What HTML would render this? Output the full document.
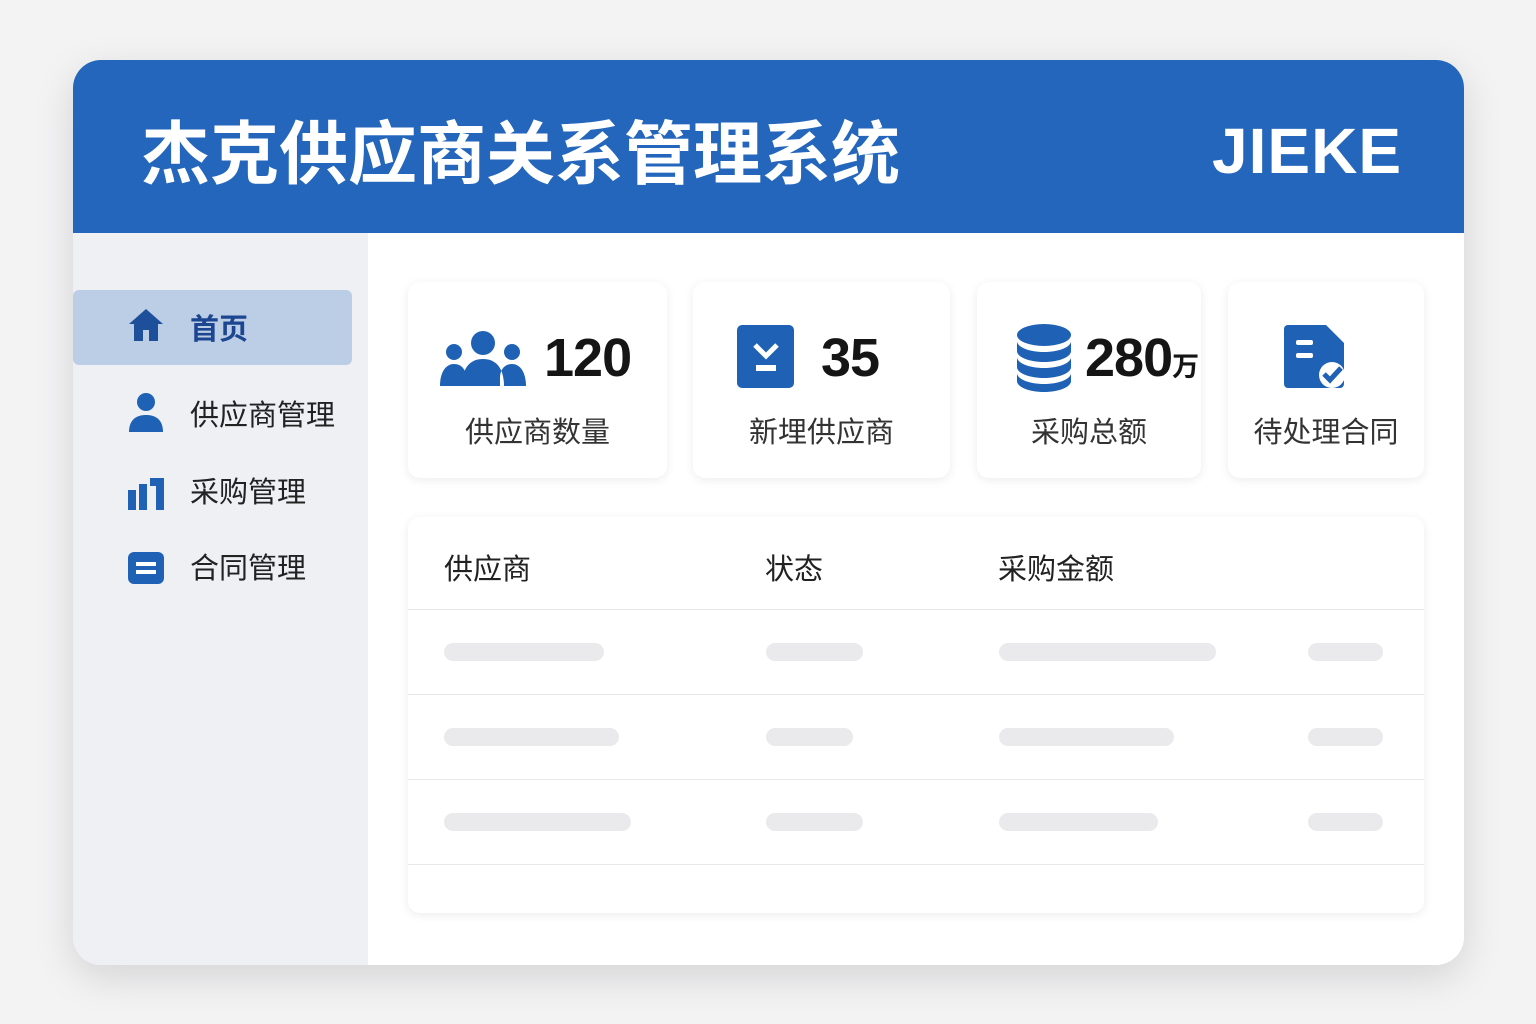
<!DOCTYPE html>
<html><head><meta charset="utf-8"><style>
*{margin:0;padding:0;box-sizing:border-box}
body{width:1536px;height:1024px;background:#f3f3f4;font-family:"Liberation Sans","Noto Sans CJK SC",sans-serif;position:relative;overflow:hidden}
.app{position:absolute;left:73px;top:60px;width:1391px;height:905px;border-radius:28px;background:#fff;overflow:hidden;box-shadow:0 12px 40px rgba(0,0,0,.13)}
.hdr{position:absolute;left:0;top:0;width:100%;height:173px;background:#2366bb}
.title{position:absolute;left:68px;top:46px;color:#fff;font-size:69px;font-weight:bold;letter-spacing:0;font-family:"Noto Sans CJK SC",sans-serif;line-height:84px}
.logo{position:absolute;right:62px;top:54px;color:#fff;font-size:64px;font-weight:bold;line-height:74px;letter-spacing:1px}
.side{position:absolute;left:0;top:173px;width:295px;height:732px;background:#eef0f4}
.act{position:absolute;left:0;top:57px;width:279px;height:75px;background:#bccde6;border-radius:6px}
.nav{position:absolute;left:117px;font-size:29px;color:#222;font-family:"Noto Sans CJK SC",sans-serif;line-height:40px;white-space:nowrap}
.ic{position:absolute;left:54px}
.card{position:absolute;top:222px;height:196px;background:#fff;border-radius:12px;box-shadow:0 2px 10px rgba(0,0,0,.08)}
.num{position:absolute;font-size:54px;font-weight:bold;color:#151515;line-height:60px;white-space:nowrap;letter-spacing:-1px}
.lbl{position:absolute;top:128px;width:100%;text-align:center;font-size:29px;color:#333;font-family:"Noto Sans CJK SC",sans-serif;line-height:40px}
.tbl{position:absolute;left:335px;top:457px;width:1016px;height:396px;background:#fff;border-radius:12px;box-shadow:0 2px 10px rgba(0,0,0,.08)}
.th{position:absolute;top:30px;font-size:29px;color:#222;font-family:"Noto Sans CJK SC",sans-serif;line-height:40px}
.ln{position:absolute;left:0;width:100%;height:1px;background:#e8e8ea}
.b{position:absolute;height:18px;border-radius:9px;background:#eaeaec}
</style></head><body>
<div class="app">
<div class="hdr"><div class="title">杰克供应商关系管理系统</div><div class="logo">JIEKE</div></div>
<div class="side">
<div class="act"></div>
<svg class="ic" style="top:73px" width="38" height="38" viewBox="0 0 38 38"><path d="M19 3L2 18h5v17h9V24h6v11h9V18h5z" fill="#1d4f9a"/></svg>
<div class="nav" style="top:74px;color:#1d4690;font-weight:bold">首页</div>
<svg class="ic" style="top:158px" width="38" height="42" viewBox="0 0 38 42"><circle cx="19" cy="11" r="9" fill="#1f62b5"/><path d="M2 41c0-12 7-17 17-17s17 5 17 17z" fill="#1f62b5"/></svg>
<div class="nav" style="top:160px">供应商管理</div>
<svg class="ic" style="top:243px" width="38" height="34" viewBox="0 0 38 34"><path d="M1 14h8v20H1zM12 8h8v26h-8zM23 2h14v32h-8V10h-6z" fill="#1f62b5"/></svg>
<div class="nav" style="top:237px">采购管理</div>
<svg class="ic" style="top:318px" width="38" height="34" viewBox="0 0 38 34"><rect x="1" y="1" width="36" height="32" rx="6" fill="#1f62b5"/><rect x="9" y="11" width="20" height="4" fill="#fff"/><rect x="9" y="19" width="20" height="4" fill="#fff"/></svg>
<div class="nav" style="top:313px">合同管理</div>
</div>
<div class="card" style="left:335px;width:259px">
<svg style="position:absolute;left:32px;top:48px" width="86" height="58" viewBox="0 0 86 58"><circle cx="43" cy="13" r="12" fill="#1f62b5"/><circle cx="14" cy="22" r="8" fill="#1f62b5"/><circle cx="72" cy="22" r="8" fill="#1f62b5"/><path d="M0 56c0-14 6-22 14-22s12 6 12 14v8zM86 56c0-14-6-22-14-22s-12 6-12 14v8zM22 56c0-18 8-27 21-27s21 9 21 27z" fill="#1f62b5"/></svg>
<div class="num" style="left:136px;top:46px">120</div><div class="lbl">供应商数量</div></div>
<div class="card" style="left:620px;width:257px">
<svg style="position:absolute;left:44px;top:43px" width="58" height="64" viewBox="0 0 58 64"><rect x="0" y="0" width="57" height="63" rx="5" fill="#1f62b5"/><path d="M18 20l11 11 11-11" stroke="#fff" stroke-width="5" fill="none"/><rect x="19" y="40" width="20" height="6" fill="#fff"/></svg>
<div class="num" style="left:128px;top:46px">35</div><div class="lbl">新埋供应商</div></div>
<div class="card" style="left:904px;width:224px">
<svg style="position:absolute;left:40px;top:42px" width="56" height="68" viewBox="0 0 56 68"><ellipse cx="27" cy="11" rx="27" ry="11" fill="#1f62b5"/><path d="M0 17c0 6 12 11 27 11s27-5 27-11v10c0 6-12 11-27 11S0 33 0 27zM0 33c0 6 12 11 27 11s27-5 27-11v10c0 6-12 11-27 11S0 49 0 43zM0 49c0 6 12 11 27 11s27-5 27-11v8c0 6-12 11-27 11S0 63 0 57z" fill="#1f62b5"/></svg>
<div class="num" style="left:108px;top:46px">280<span style="font-size:27px;font-family:'Noto Sans CJK SC';letter-spacing:0">万</span></div><div class="lbl">采购总额</div></div>
<div class="card" style="left:1155px;width:196px">
<svg style="position:absolute;left:56px;top:43px" width="64" height="64" viewBox="0 0 64 64"><path d="M4 0h38l18 18v41a4 4 0 0 1-4 4H4a4 4 0 0 1-4-4V4a4 4 0 0 1 4-4z" fill="#1f62b5"/><rect x="12" y="15" width="17" height="5" rx="2" fill="#fff"/><rect x="12" y="28" width="17" height="5" rx="2" fill="#fff"/><circle cx="48" cy="50" r="13" fill="#fff"/><path d="M40 49l6 6 11-12" stroke="#1f62b5" stroke-width="5" fill="none"/></svg>
<div class="lbl">待处理合同</div></div>
<div class="tbl">
<div class="th" style="left:36px">供应商</div><div class="th" style="left:357px">状态</div><div class="th" style="left:590px">采购金额</div>
<div class="ln" style="top:92px"></div><div class="ln" style="top:177px"></div><div class="ln" style="top:262px"></div><div class="ln" style="top:347px"></div>
<div class="b" style="left:36px;top:126px;width:160px"></div><div class="b" style="left:358px;top:126px;width:97px"></div><div class="b" style="left:591px;top:126px;width:217px"></div><div class="b" style="left:900px;top:126px;width:75px"></div>
<div class="b" style="left:36px;top:211px;width:175px"></div><div class="b" style="left:358px;top:211px;width:87px"></div><div class="b" style="left:591px;top:211px;width:175px"></div><div class="b" style="left:900px;top:211px;width:75px"></div>
<div class="b" style="left:36px;top:296px;width:187px"></div><div class="b" style="left:358px;top:296px;width:97px"></div><div class="b" style="left:591px;top:296px;width:159px"></div><div class="b" style="left:900px;top:296px;width:75px"></div>
</div>
</div>
</body></html>
